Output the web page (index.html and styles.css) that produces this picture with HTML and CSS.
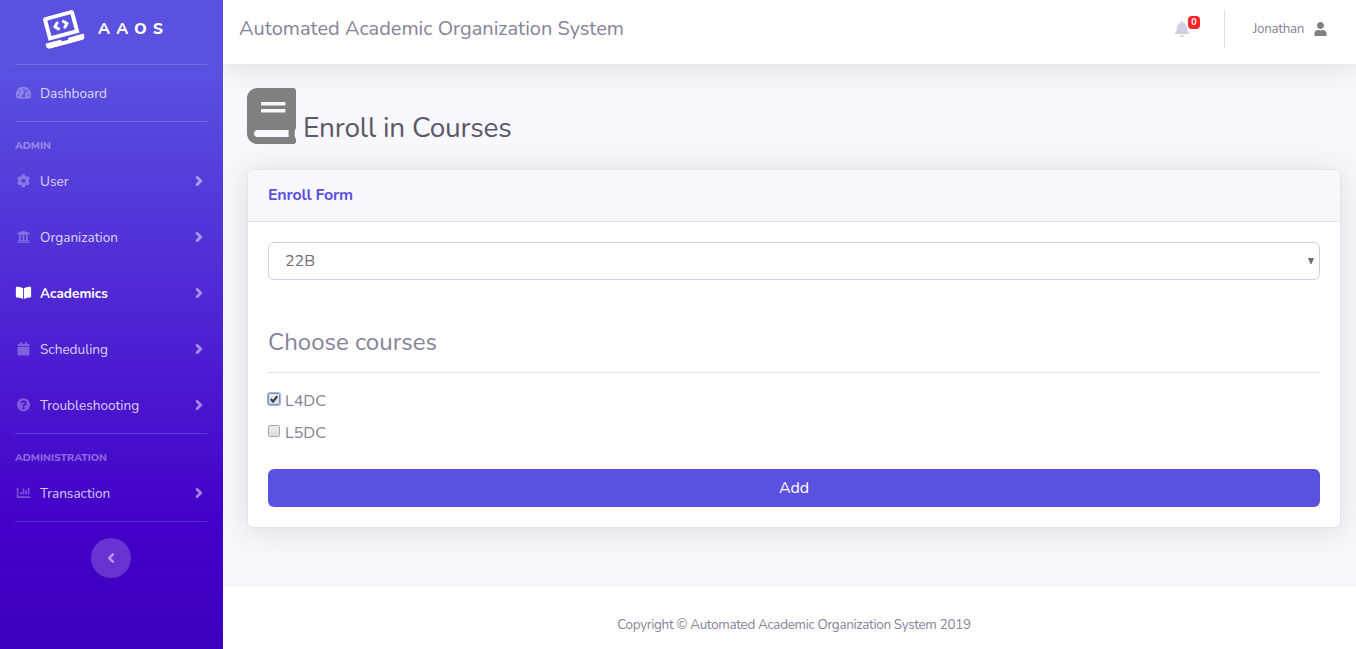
FILE: index.html
```html
<!DOCTYPE html>
<html lang="en">
<head>
<meta charset="utf-8">
<title>AAOS - Enroll in Courses</title>
<link rel="stylesheet" href="styles.css">
</head>
<body>
<svg class="sprite" width="0" height="0">
  <symbol id="angle-right" viewBox="0 0 256 512"><path d="M224.300 273l-136 136c-9.400 9.400-24.600 9.400-33.900 0l-22.600-22.600c-9.400-9.400-9.400-24.600 0-33.900l96.400-96.400-96.400-96.400c-9.400-9.400-9.400-24.600 0-33.900L54.300 103c9.400-9.400 24.600-9.400 33.900 0l136 136c9.500 9.400 9.500 24.600.1 34z"/></symbol>
</svg>
<div class="wrapper">
  <nav class="sidebar">
    <a class="brand">
      <svg class="brand-icon" viewBox="0 0 640 512"><path d="M255.030 261.650c6.250 6.250 16.380 6.250 22.630 0l11.310-11.310c6.250-6.250 6.250-16.380 0-22.630L253.250 192l35.710-35.720c6.250-6.250 6.250-16.380 0-22.630l-11.310-11.310c-6.250-6.250-16.380-6.250-22.630 0l-58.340 58.340c-6.250 6.250-6.250 16.380 0 22.630l58.350 58.340zm96.010-11.300l11.310 11.310c6.250 6.250 16.380 6.250 22.630 0l58.340-58.340c6.250-6.250 6.250-16.380 0-22.630l-58.340-58.340c-6.250-6.250-16.380-6.250-22.630 0l-11.310 11.310c-6.250 6.250-6.250 16.380 0 22.630L386.750 192l-35.710 35.720c-6.250 6.250-6.250 16.380 0 22.630zM624 416H381.540c-.74 19.810-14.710 32-32.740 32H288c-18.690 0-33.020-17.470-32.770-32H16c-8.800 0-16 7.200-16 16v16c0 35.200 28.800 64 64 64h512c35.200 0 64-28.800 64-64v-16c0-8.800-7.200-16-16-16zM576 48c0-26.400-21.600-48-48-48H112C85.600 0 64 21.600 64 48v336h512V48zm-64 272H128V64h384v256z"/></svg>
      <span class="brand-text">AAOS</span>
    </a>
    <hr class="divider">
    <a class="nav-item">
      <svg class="nav-icon" viewBox="0 0 576 512"><path fill-rule="evenodd" d="M288 32C128.940 32 0 160.940 0 320c0 52.800 14.250 102.260 39.060 144.800 5.610 9.620 16.300 15.200 27.440 15.200h443c11.140 0 21.830-5.580 27.440-15.200C561.750 422.260 576 372.800 576 320c0-159.060-128.940-288-288-288zm0 64c14.710 0 26.580 10.130 30.320 23.650-1.110 2.260-2.640 4.230-3.450 6.670l-9.220 27.670c-5.130 3.490-10.970 6.010-17.640 6.010-17.670 0-32-14.330-32-32S270.330 96 288 96zM96 384c-17.670 0-32-14.330-32-32s14.330-32 32-32 32 14.330 32 32-14.330 32-32 32zm48-160c-17.670 0-32-14.330-32-32s14.330-32 32-32 32 14.330 32 32-14.330 32-32 32zm246.770-72.410l-61.330 184C343.130 347.330 352 364.540 352 384c0 11.720-3.380 22.550-8.880 32H232.880c-5.500-9.450-8.880-20.280-8.880-32 0-33.940 26.500-61.430 59.900-63.590l61.340-184.010c4.170-12.560 17.730-19.450 30.360-15.170 12.570 4.190 19.350 17.790 15.170 30.360zm14.660 57.200l15.520-46.550c3.470-1.290 7.130-2.230 11.050-2.230 17.670 0 32 14.330 32 32s-14.330 32-32 32c-11.380-.010-20.890-6.280-26.570-15.220zM480 384c-17.670 0-32-14.330-32-32s14.330-32 32-32 32 14.330 32 32-14.330 32-32 32z"/></svg>
      <span class="nav-label">Dashboard</span>
    </a>
    <hr class="divider">
    <div class="nav-heading">ADMIN</div>
    <a class="nav-item">
      <svg class="nav-icon" viewBox="0 0 512 512"><path d="M487.400 315.700l-42.600-24.600c4.300-23.200 4.300-47 0-70.200l42.600-24.600c4.900-2.800 7.100-8.600 5.500-14-11.100-35.600-30-67.800-54.700-94.600-3.800-4.100-10-5.100-14.800-2.300L380.800 110c-17.900-15.400-38.500-27.300-60.800-35.100V25.800c0-5.600-3.900-10.500-9.400-11.700-36.700-8.200-74.300-7.800-109.200 0-5.500 1.200-9.400 6.100-9.400 11.700V75c-22.200 7.900-42.800 19.800-60.800 35.100L88.700 85.500c-4.900-2.800-11-1.900-14.800 2.300-24.700 26.700-43.600 58.900-54.700 94.600-1.700 5.400.6 11.200 5.500 14L67.300 221c-4.300 23.200-4.300 47 0 70.200l-42.600 24.600c-4.900 2.800-7.100 8.600-5.500 14 11.100 35.600 30 67.800 54.700 94.600 3.800 4.100 10 5.100 14.800 2.300l42.600-24.600c17.900 15.400 38.500 27.300 60.800 35.100v49.200c0 5.600 3.900 10.500 9.400 11.700 36.700 8.200 74.300 7.800 109.200 0 5.500-1.200 9.400-6.100 9.400-11.700v-49.200c22.200-7.900 42.800-19.800 60.800-35.100l42.600 24.600c4.900 2.800 11 1.900 14.800-2.300 24.700-26.700 43.600-58.900 54.700-94.600 1.500-5.500-.7-11.300-5.600-14.100zM256 336c-44.100 0-80-35.900-80-80s35.900-80 80-80 80 35.900 80 80-35.900 80-80 80z"/></svg>
      <span class="nav-label">User</span>
      <svg class="chevron"><use href="#angle-right"/></svg>
    </a>
    <a class="nav-item">
      <svg class="nav-icon" viewBox="0 0 512 512"><path d="M496 128v16a8 8 0 0 1-8 8h-24v12c0 6.627-5.373 12-12 12H60c-6.627 0-12-5.373-12-12v-12H24a8 8 0 0 1-8-8v-16a8 8 0 0 1 4.941-7.392l232-88a7.996 7.996 0 0 1 6.118 0l232 88A8 8 0 0 1 496 128zm-24 304H40c-13.255 0-24 10.745-24 24v16a8 8 0 0 0 8 8h464a8 8 0 0 0 8-8v-16c0-13.255-10.745-24-24-24zM96 192v192H60c-6.627 0-12 5.373-12 12v20h416v-20c0-6.627-5.373-12-12-12h-36V192h-64v192h-64V192h-64v192h-64V192H96z"/></svg>
      <span class="nav-label">Organization</span>
      <svg class="chevron"><use href="#angle-right"/></svg>
    </a>
    <a class="nav-item active">
      <svg class="nav-icon" viewBox="0 0 576 512"><path d="M542.220 32.050c-54.800 3.110-163.720 14.430-230.960 55.590-4.640 2.840-7.270 7.890-7.270 13.170v363.870c0 11.550 12.630 18.850 23.280 13.490 69.180-34.820 169.230-44.320 218.700-46.920 16.890-.89 30.020-14.430 30.020-30.660V62.750c.010-17.710-15.350-31.740-33.770-30.700zM264.730 87.640C197.500 46.480 88.580 35.170 33.780 32.050 15.360 31.010 0 45.040 0 62.750V400.600c0 16.240 13.130 29.780 30.020 30.660 49.490 2.600 149.590 12.110 218.770 46.950 10.620 5.350 23.210-1.940 23.210-13.460V100.630c0-5.290-2.620-10.140-7.270-12.990z"/></svg>
      <span class="nav-label">Academics</span>
      <svg class="chevron"><use href="#angle-right"/></svg>
    </a>
    <a class="nav-item">
      <svg class="nav-icon" viewBox="0 0 448 512"><path d="M12 192h424c6.600 0 12 5.400 12 12v260c0 26.500-21.500 48-48 48H48c-26.500 0-48-21.500-48-48V204c0-6.600 5.400-12 12-12zm436-44v-36c0-26.500-21.500-48-48-48h-48V12c0-6.600-5.400-12-12-12h-40c-6.600 0-12 5.400-12 12v52H160V12c0-6.600-5.400-12-12-12h-40c-6.600 0-12 5.400-12 12v52H48C21.500 64 0 85.500 0 112v36c0 6.600 5.400 12 12 12h424c6.600 0 12-5.400 12-12z"/></svg>
      <span class="nav-label">Scheduling</span>
      <svg class="chevron"><use href="#angle-right"/></svg>
    </a>
    <a class="nav-item">
      <svg class="nav-icon" viewBox="0 0 512 512"><path d="M504 256c0 136.997-111.043 248-248 248S8 392.997 8 256C8 119.083 119.043 8 256 8s248 111.083 248 248zM262.655 90c-54.497 0-89.255 22.957-116.549 63.758-3.536 5.286-2.353 12.415 2.715 16.258l34.699 26.310c5.205 3.947 12.621 3.008 16.665-2.122 17.864-22.658 30.113-35.797 57.303-35.797 20.429 0 45.698 13.148 45.698 32.958 0 14.976-12.363 22.667-32.534 33.976C247.128 238.528 216 254.941 216 296v4c0 6.627 5.373 12 12 12h56c6.627 0 12-5.373 12-12v-1.333c0-28.462 83.186-29.647 83.186-106.667 0-58.002-60.165-102-116.531-102zM256 338c-25.365 0-46 20.635-46 46 0 25.364 20.635 46 46 46s46-20.636 46-46c0-25.365-20.635-46-46-46z"/></svg>
      <span class="nav-label">Troubleshooting</span>
      <svg class="chevron"><use href="#angle-right"/></svg>
    </a>
    <hr class="divider">
    <div class="nav-heading">ADMINISTRATION</div>
    <a class="nav-item">
      <svg class="nav-icon" viewBox="0 0 512 512"><path d="M332.800 320h38.400c6.400 0 12.800-6.400 12.800-12.800V172.800c0-6.400-6.400-12.800-12.800-12.800h-38.400c-6.400 0-12.800 6.400-12.800 12.800v134.400c0 6.400 6.400 12.800 12.800 12.800zm96 0h38.400c6.400 0 12.800-6.400 12.800-12.800V76.800c0-6.400-6.400-12.800-12.800-12.800h-38.400c-6.400 0-12.800 6.400-12.800 12.800v230.400c0 6.400 6.400 12.800 12.800 12.800zm-288 0h38.400c6.400 0 12.800-6.400 12.800-12.800v-70.400c0-6.400-6.400-12.800-12.800-12.800h-38.400c-6.400 0-12.800 6.400-12.800 12.800v70.400c0 6.400 6.400 12.800 12.800 12.800zm96 0h38.400c6.400 0 12.800-6.400 12.800-12.800V108.800c0-6.400-6.400-12.800-12.800-12.800h-38.400c-6.400 0-12.800 6.400-12.800 12.800v198.400c0 6.400 6.400 12.800 12.800 12.800zM496 384H64V80c0-8.840-7.160-16-16-16H16C7.160 64 0 71.160 0 80v336c0 17.670 14.330 32 32 32h464c8.840 0 16-7.160 16-16v-32c0-8.840-7.160-16-16-16z"/></svg>
      <span class="nav-label">Transaction</span>
      <svg class="chevron"><use href="#angle-right"/></svg>
    </a>
    <hr class="divider">
    <button class="toggle" aria-label="Collapse sidebar">
      <svg viewBox="0 0 256 512"><path d="M31.700 239l136-136c9.400-9.400 24.600-9.400 33.900 0l22.600 22.600c9.400 9.400 9.400 24.600 0 33.900L127.900 256l96.400 96.400c9.400 9.400 9.400 24.600 0 33.900L201.700 409c-9.400 9.400-24.600 9.400-33.900 0l-136-136c-9.500-9.400-9.500-24.600-.1-34z"/></svg>
    </button>
  </nav>

  <div class="content">
    <header class="topbar">
      <span class="app-title">Automated Academic Organization System</span>
      <div class="alerts">
        <svg class="bell" viewBox="0 0 448 512"><path d="M224 512c35.320 0 63.970-28.650 63.970-64H160.030c0 35.350 28.650 64 63.970 64zm215.390-149.710c-19.320-20.760-55.470-51.990-55.470-154.290 0-77.700-54.480-139.900-127.940-155.160V32c0-17.670-14.320-32-31.980-32s-31.980 14.330-31.980 32v20.840C118.560 68.100 64.080 130.300 64.080 208c0 102.300-36.150 133.530-55.470 154.290-6 6.450-8.660 14.160-8.610 21.710.11 16.400 12.980 32 32.100 32h383.800c19.120 0 32-15.600 32.100-32 .05-7.550-2.610-15.270-8.610-21.710z"/></svg>
        <span class="badge">0</span>
      </div>
      <div class="topbar-divider"></div>
      <div class="account">
        <span class="username">Jonathan</span>
        <svg class="user-icon" viewBox="0 0 448 512"><path d="M224 256c70.700 0 128-57.300 128-128S294.700 0 224 0 96 57.300 96 128s57.300 128 128 128zm89.600 32h-16.700c-22.200 10.200-46.900 16-72.900 16s-50.600-5.800-72.900-16h-16.700C60.200 288 0 348.200 0 422.400V464c0 26.500 21.500 48 48 48h352c26.500 0 48-21.500 48-48v-41.600c0-74.200-60.200-134.400-134.400-134.400z"/></svg>
      </div>
    </header>

    <main class="page">
      <h1 class="page-title">
        <svg class="book" viewBox="0 0 448 512"><path d="M448 360V24c0-13.300-10.700-24-24-24H96C43 0 0 43 0 96v320c0 53 43 96 96 96h328c13.300 0 24-10.700 24-24v-16c0-7.500-3.500-14.300-8.900-18.700-4.200-15.400-4.200-59.300 0-74.700 5.400-4.300 8.900-11.100 8.900-18.600zM128 134c0-3.300 2.700-6 6-6h212c3.300 0 6 2.700 6 6v20c0 3.300-2.700 6-6 6H134c-3.300 0-6-2.700-6-6v-20zm0 64c0-3.300 2.700-6 6-6h212c3.300 0 6 2.700 6 6v20c0 3.300-2.700 6-6 6H134c-3.300 0-6-2.700-6-6v-20zm253.400 250H96c-17.700 0-32-14.300-32-32 0-17.600 14.400-32 32-32h285.400c-1.900 17.100-1.900 46.900 0 64z"/></svg>
        <span>Enroll in Courses</span>
      </h1>
      <section class="card">
        <div class="card-header"><span class="card-title">Enroll Form</span></div>
        <form class="card-body">
          <div class="select-wrap">
            <select class="select"><option>22B</option></select>
            <svg class="select-arrow" viewBox="0 0 6 6"><path d="M0 0h6L3.500 6h-1z"/></svg>
          </div>
          <h2 class="section-title">Choose courses</h2>
          <hr class="rule">
          <label class="check-row">
            <span class="box checked"><svg viewBox="0 0 13 13"><path d="M3 6.600l2.500 2.700L10 3.300" fill="none" stroke="#3c3c3c" stroke-width="2.400"/></svg></span>
            <span class="check-label">L4DC</span>
          </label>
          <label class="check-row">
            <span class="box"></span>
            <span class="check-label">L5DC</span>
          </label>
          <button type="button" class="submit">Add</button>
        </form>
      </section>
    </main>

    <footer class="footer"><span class="copyright">Copyright © Automated Academic Organization System 2019</span></footer>
  </div>
</div>
</body>
</html>
```
FILE: styles.css
```css
* { box-sizing: border-box; }

body {
  margin: 0;
  font-family: Nunito, Lato, "Open Sans", sans-serif;
  font-size: 16px;
  line-height: 24px;
  color: #858398;
  background: #f8f8fc;
}

.sprite { display: none; }
.wrapper { display: flex; height: 649px; overflow: hidden; }

/* Sidebar */
.sidebar {
  flex: 0 0 223px;
  display: flex;
  flex-direction: column;
  background: linear-gradient(180deg, #5a51e0 10%, #4300c8 81%, #3c00be 100%);
}
.brand { display: flex; align-items: center; height: 64px; padding: 0 0 7px 42px; color: #fff; }
.brand-icon { width: 40px; height: 32px; fill: #fff; transform: rotate(-15deg); }
.brand-text { margin-left: 16px; font-size: 16px; font-weight: 800; letter-spacing: 6.1px; }
.divider { width: 192px; height: 1px; margin: 0 0 0 15px; border: 0; background: rgba(255, 255, 255, .17); }
.nav-item { display: flex; align-items: center; height: 56px; padding: 0 20px 0 15px; font-size: 13.6px; color: rgba(255, 255, 255, .8); }
.nav-label { padding-top: 2px; }
.nav-icon { width: 17px; height: 13.6px; margin-right: 8px; fill: rgba(255, 255, 255, .3); }
.chevron { width: 8px; height: 16px; margin-left: auto; fill: rgba(255, 255, 255, .5); stroke: rgba(255, 255, 255, .25); stroke-width: 16; }
.active { color: #fff; font-weight: 700; }
.active .nav-icon { fill: #fff; }
.nav-heading { height: 31px; padding: 16px 0 0 15px; font-size: 10.4px; line-height: 15px; font-weight: 800; color: rgba(255, 255, 255, .4); }
.toggle { display: flex; align-items: center; justify-content: center; width: 40px; height: 40px; margin: 16px 0 0 91px; padding: 0 1px 0 0; border: 0; border-radius: 50%; background: rgba(255, 255, 255, .2); }
.toggle svg { width: 8px; height: 16px; fill: rgba(255, 255, 255, .5); }

/* Top bar */
.content { flex: 1; display: flex; flex-direction: column; min-width: 0; overflow: hidden; }
.topbar { display: flex; flex: 0 0 64px; align-items: center; padding: 0 29px 6px 16px; background: #fff; box-shadow: 0 2.4px 28px 0 rgba(58, 59, 69, .15); }
.app-title { margin-right: auto; font-size: 20px; }
.alerts { position: relative; display: flex; width: 14px; }
.bell { width: 14px; height: 16px; fill: #d1d0e2; }
.badge { position: absolute; top: -5px; left: 13px; width: 12px; height: 13px; border-radius: 4px; background: #fa2328; color: #fff; font-size: 9px; line-height: 13px; font-weight: 700; text-align: center; }
.topbar-divider { width: 1px; height: 38px; margin: 0 28px 0 35px; background: #e1e1ee; }
.account { display: flex; align-items: center; font-size: 13.4px; letter-spacing: -.3px; }
.username { width: 52px; margin-top: -1px; white-space: nowrap; }
.user-icon { width: 13px; height: 14px; margin-left: 9px; fill: #808080; }

/* Page */
.page { flex: 1; padding: 24px 15px 0 24px; }
.page-title { display: flex; align-items: flex-end; height: 56px; margin: 0 0 25px; font-size: 28px; line-height: 32px; font-weight: 400; letter-spacing: -.2px; color: #5a5869; }
.book { width: 49px; height: 56px; margin-right: 7px; fill: #808080; }
.card { height: 359px; border: 1px solid #e3e3ef; border-radius: 6px; background: #fff; box-shadow: 0 2.4px 28px 0 rgba(58, 59, 69, .15); }
.card-header { display: flex; align-items: center; height: 52px; padding: 0 20px 2px; border-bottom: 1px solid #e3e3ef; border-radius: 5px 5px 0 0; background: #f8f8fc; }
.card-title { font-weight: 700; letter-spacing: -.2px; color: #5a51e0; }
.card-body { display: flex; flex-direction: column; padding: 20px; }
.select-wrap { display: grid; height: 38px; }
.select { grid-area: 1 / 1; padding: 0 16px; border: 1px solid #d1d0e2; border-radius: 6px; background: #fff; color: #6e6c7e; font: inherit; appearance: none; }
.select-arrow { grid-area: 1 / 1; align-self: center; justify-self: end; width: 6px; height: 6px; margin-right: 6px; fill: #6e6c7e; }
.section-title { margin: 48px 0 0; font-size: 24px; line-height: 29px; font-weight: 400; }
.rule { width: 100%; height: 1px; margin: 15px 0 12px; border: 0; background: #e4e4e6; }
.check-row { display: flex; align-items: center; height: 32px; }
.box { width: 12px; height: 12px; margin: -4px 5px 0 0; border: 1px solid #a8a8a8; border-radius: 2px; background: linear-gradient(#ececec, #dcdcdc); }
.box svg { display: block; width: 12px; height: 12px; margin: -1px; }
.checked { border-color: #7890c0; box-shadow: 0 0 0 1px #9db8ea; }
.submit { height: 38px; margin-top: 20px; padding: 0; border: 0; border-radius: 6px; background: #5a51e0; color: #fff; font: inherit; }

.footer { display: flex; flex: 0 0 62px; align-items: center; justify-content: center; padding: 14px 0 0 9px; background: #fff; font-size: 13.4px; letter-spacing: -.3px; }
```
